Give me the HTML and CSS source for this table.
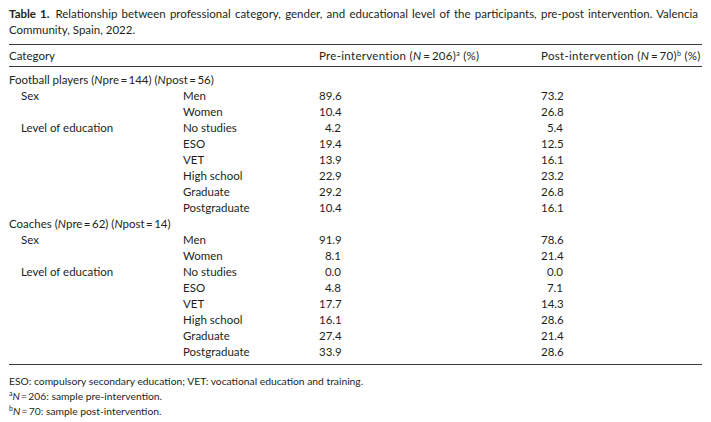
FILE: index.html
```html
<!DOCTYPE html>
<html>
<head>
<meta charset="utf-8">
<link rel="stylesheet" href="styles.css">
</head>
<body>
<div class="page">
  <p class="caption"><b class="label">Table 1.</b>Relationship between professional category, gender, and educational level of the participants, pre-post intervention. Valencia Community, Spain, 2022.</p>
  <div class="table">
    <div class="row head">
      <div class="c1">Category</div>
      <div class="c2"></div>
      <div class="c3">Pre-intervention (<i>N</i>&#8201;=&#8201;206)<sup>a</sup> (%)</div>
      <div class="c4">Post-intervention (<i>N</i>&#8201;=&#8201;70)<sup>b</sup> (%)</div>
    </div>
    <div class="body">
      <div class="row"><div class="group">Football players (<i>N</i>pre&#8201;=&#8201;144) (<i>N</i>post&#8201;=&#8201;56)</div></div>
      <div class="row"><div class="c1 sub">Sex</div><div class="c2">Men</div><div class="c3"><span class="num">89.6</span></div><div class="c4"><span class="num">73.2</span></div></div>
      <div class="row"><div class="c1 sub"></div><div class="c2">Women</div><div class="c3"><span class="num">10.4</span></div><div class="c4"><span class="num">26.8</span></div></div>
      <div class="row"><div class="c1 sub">Level of education</div><div class="c2">No studies</div><div class="c3"><span class="num">4.2</span></div><div class="c4"><span class="num">5.4</span></div></div>
      <div class="row"><div class="c1 sub"></div><div class="c2">ESO</div><div class="c3"><span class="num">19.4</span></div><div class="c4"><span class="num">12.5</span></div></div>
      <div class="row"><div class="c1 sub"></div><div class="c2">VET</div><div class="c3"><span class="num">13.9</span></div><div class="c4"><span class="num">16.1</span></div></div>
      <div class="row"><div class="c1 sub"></div><div class="c2">High school</div><div class="c3"><span class="num">22.9</span></div><div class="c4"><span class="num">23.2</span></div></div>
      <div class="row"><div class="c1 sub"></div><div class="c2">Graduate</div><div class="c3"><span class="num">29.2</span></div><div class="c4"><span class="num">26.8</span></div></div>
      <div class="row"><div class="c1 sub"></div><div class="c2">Postgraduate</div><div class="c3"><span class="num">10.4</span></div><div class="c4"><span class="num">16.1</span></div></div>
      <div class="row"><div class="group">Coaches (<i>N</i>pre&#8201;=&#8201;62) (<i>N</i>post&#8201;=&#8201;14)</div></div>
      <div class="row"><div class="c1 sub">Sex</div><div class="c2">Men</div><div class="c3"><span class="num">91.9</span></div><div class="c4"><span class="num">78.6</span></div></div>
      <div class="row"><div class="c1 sub"></div><div class="c2">Women</div><div class="c3"><span class="num">8.1</span></div><div class="c4"><span class="num">21.4</span></div></div>
      <div class="row"><div class="c1 sub">Level of education</div><div class="c2">No studies</div><div class="c3"><span class="num">0.0</span></div><div class="c4"><span class="num">0.0</span></div></div>
      <div class="row"><div class="c1 sub"></div><div class="c2">ESO</div><div class="c3"><span class="num">4.8</span></div><div class="c4"><span class="num">7.1</span></div></div>
      <div class="row"><div class="c1 sub"></div><div class="c2">VET</div><div class="c3"><span class="num">17.7</span></div><div class="c4"><span class="num">14.3</span></div></div>
      <div class="row"><div class="c1 sub"></div><div class="c2">High school</div><div class="c3"><span class="num">16.1</span></div><div class="c4"><span class="num">28.6</span></div></div>
      <div class="row"><div class="c1 sub"></div><div class="c2">Graduate</div><div class="c3"><span class="num">27.4</span></div><div class="c4"><span class="num">21.4</span></div></div>
      <div class="row"><div class="c1 sub"></div><div class="c2">Postgraduate</div><div class="c3"><span class="num">33.9</span></div><div class="c4"><span class="num">28.6</span></div></div>
    </div>
  </div>
  <div class="notes">
    <p>ESO: compulsory secondary education; VET: vocational education and training.</p>
    <p><sup>a</sup><i>N</i>&#8201;=&#8201;206: sample pre-intervention.</p>
    <p><sup>b</sup><i>N</i>&#8201;=&#8201;70: sample post-intervention.</p>
  </div>
</div>
</body>
</html>
```

FILE: styles.css
```css
html, body {
  margin: 0;
  padding: 0;
  background: #ffffff;
}
body {
  font-family: Lato, "Open Sans", "DejaVu Sans", sans-serif;
  font-size: 11.5px;
  color: #231f20;
}
.page {
  padding: 6px 9px 0 9px;
}
p {
  margin: 0;
}
.caption {
  line-height: 16px;
  padding-right: 4px;
  text-align: justify;
}
.caption .label {
  font-weight: 700;
  margin-right: 6px;
}
.table {
  margin-top: 6px;
  border-top: 1px solid #3a3a3a;
  border-bottom: 1px solid #3a3a3a;
}
.row {
  display: grid;
  grid-template-columns: 174px 136px 222px 1fr;
  height: 16px;
  line-height: 16px;
  white-space: nowrap;
}
.row.head {
  height: 21px;
  line-height: 21px;
  border-bottom: 1px solid #3a3a3a;
}
.head .c3,
.head .c4 {
  letter-spacing: 0.3px;
}
.body {
  padding: 5px 0 4px 0;
}
.group {
  grid-column: 1 / -1;
}
.sub {
  padding-left: 12px;
}
.num {
  display: inline-block;
  width: 22px;
  text-align: right;
}
sup {
  font-size: 7px;
  line-height: 0;
  vertical-align: 4px;
}
.notes {
  padding-top: 9px;
  line-height: 15px;
  font-size: 10.3px;
}
```
